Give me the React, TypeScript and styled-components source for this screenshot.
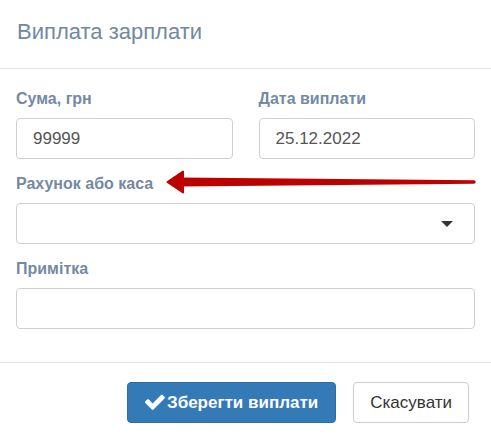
import styled, { createGlobalStyle } from "styled-components";

const GlobalStyle = createGlobalStyle`
  body {
    margin: 0;
    background: #fff;
    font-family: "Liberation Sans", Arial, sans-serif;
  }
`;

const Modal = styled.div`
  position: relative;
  width: 491px;
  height: 446px;
  background: #fff;
`;

const Header = styled.div`
  box-sizing: border-box;
  height: 69px;
  padding: 19px 17px 0;
  border-bottom: 1px solid #e5e5e5;
`;

const Title = styled.h4`
  margin: 0;
  font-size: 22px;
  font-weight: normal;
  line-height: 25px;
  color: #7288a1;
`;

const Body = styled.div`
  padding: 20px 16px 33px;
  display: flex;
  flex-direction: column;
  gap: 15px;
`;

const Row = styled.div`
  display: grid;
  grid-template-columns: 1fr 1fr;
  gap: 26px;
`;

const Field = styled.div`
  display: flex;
  flex-direction: column;
`;

const Label = styled.label`
  font-size: 16px;
  font-weight: bold;
  line-height: 20px;
  color: #7489a2;
  margin-bottom: 9px;
`;

const Input = styled.input`
  box-sizing: border-box;
  width: 100%;
  height: 41px;
  padding: 0 16px;
  border: 1px solid #cfcfcf;
  border-radius: 4px;
  font-family: inherit;
  font-size: 17px;
  color: #555;
  outline: none;
`;

const SelectBox = styled.div`
  box-sizing: border-box;
  height: 41px;
  padding: 0 21px 0 16px;
  border: 1px solid #cfcfcf;
  border-radius: 4px;
  display: flex;
  align-items: center;
  justify-content: flex-end;
`;

const Footer = styled.div`
  border-top: 1px solid #e5e5e5;
  padding: 19px 22px 23px;
  display: flex;
  justify-content: flex-end;
  gap: 17px;
`;

const Button = styled.button<{ $primary?: boolean }>`
  box-sizing: border-box;
  height: 41px;
  padding: 0 ${(p) => (p.$primary ? "17px" : "16px")};
  border-radius: 4px;
  border: 1px solid ${(p) => (p.$primary ? "#2e6da4" : "#ccc")};
  background: ${(p) => (p.$primary ? "#337ab7" : "#fff")};
  color: ${(p) => (p.$primary ? "#fff" : "#333")};
  font-family: inherit;
  font-size: 17px;
  font-weight: ${(p) => (p.$primary ? "bold" : "normal")};
  display: flex;
  align-items: center;
  gap: 2px;
`;

const Annotation = styled.svg`
  position: absolute;
  left: 160px;
  top: 165px;
  pointer-events: none;
`;

const CheckIcon = () => (
  <svg width="20" height="17" viewBox="120 400 1560 1100" fill="#fff">
    <path d="M1671 566q0 40-28 68l-724 724-136 136q-28 28-68 28t-68-28l-136-136-362-362q-28-28-28-68t28-68l136-136q28-28 68-28t68 28l294 295 656-657q28-28 68-28t68 28l136 136q28 28 28 68z" />
  </svg>
);

const Caret = () => (
  <svg width="12" height="6" viewBox="0 0 12 6">
    <path d="M0 0h12L6 6z" fill="#333" />
  </svg>
);

const App = () => {
  return (
    <>
      <GlobalStyle />
      <Modal>
        <Header>
          <Title>Виплата зарплати</Title>
        </Header>
        <Body>
          <Row>
            <Field>
              <Label>Сума, грн</Label>
              <Input defaultValue="99999" />
            </Field>
            <Field>
              <Label>Дата виплати</Label>
              <Input defaultValue="25.12.2022" />
            </Field>
          </Row>
          <Field>
            <Label>Рахунок або каса</Label>
            <SelectBox>
              <Caret />
            </SelectBox>
          </Field>
          <Field>
            <Label>Примітка</Label>
            <Input />
          </Field>
        </Body>
        <Footer>
          <Button $primary>
            <CheckIcon />
            Зберегти виплати
          </Button>
          <Button>Скасувати</Button>
        </Footer>
        {/* red annotation arrow pointing at the account label */}
        <Annotation width="331" height="30" viewBox="0 0 331 30">
          <path
            d="M21 12.5 L314 15.3 A1.7 1.7 0 0 1 314 18.7 L21 21.5 Z"
            fill="#bd0000"
          />
          <path
            d="M7.5 17 L23 6.5 L23 27.5 Z"
            fill="#bd0000"
            stroke="#bd0000"
            strokeWidth="2"
            strokeLinejoin="round"
          />
        </Annotation>
      </Modal>
    </>
  );
};

export default App;
